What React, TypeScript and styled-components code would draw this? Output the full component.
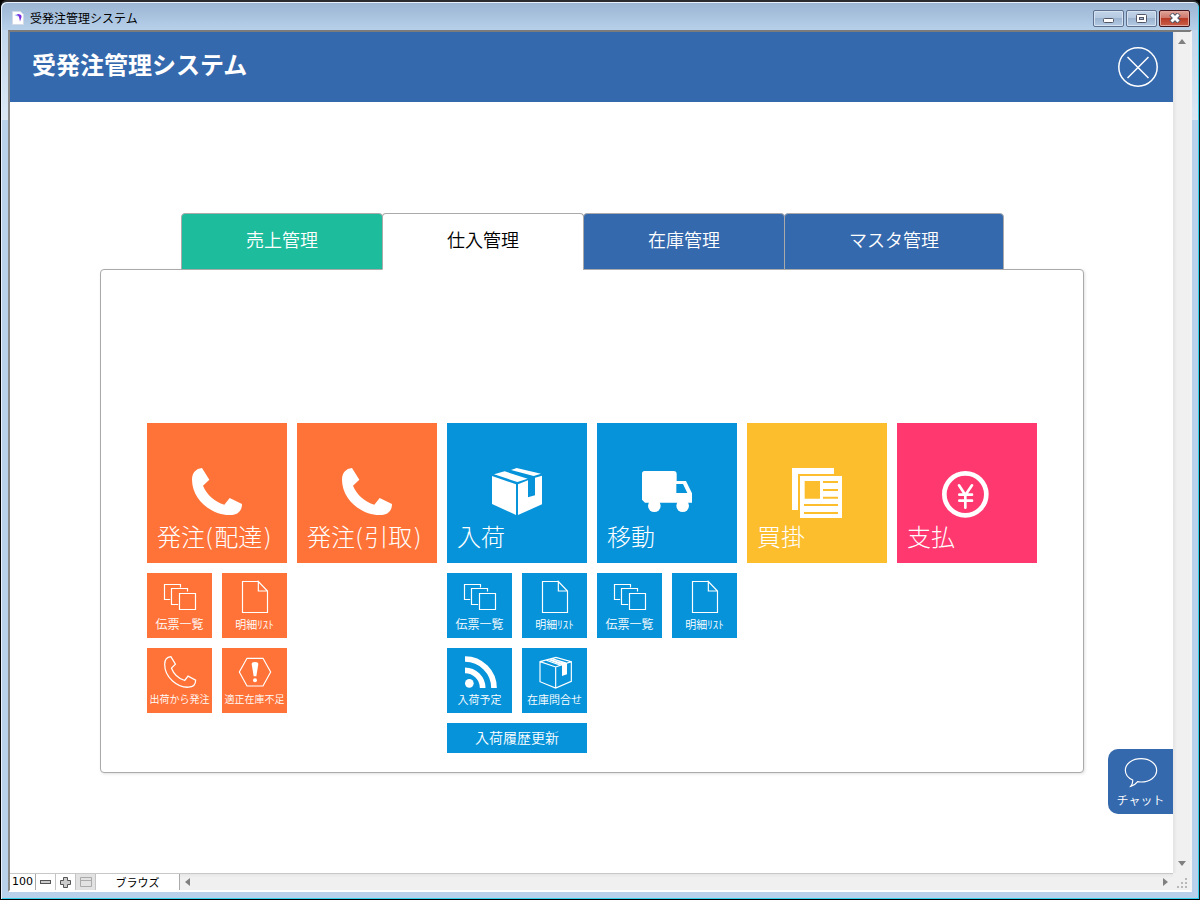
import React, { useState } from "react";
import styled, { createGlobalStyle } from "styled-components";

const BLUE = "#3569ad";
const SKY = "#0693da";
const ORANGE = "#ff7338";
const AMBER = "#fcbe2d";
const PINK = "#ff3870";
const GREEN = "#1cbc9c";
const LINE = "#aaaaaa";

const GlobalStyle = createGlobalStyle`
  * { box-sizing: border-box; }
  body {
    margin: 0;
    background: #000;
    font-family: "Noto Sans CJK JP", sans-serif;
    color: #000;
  }
  button, input { font: inherit; color: inherit; border: 0; margin: 0; padding: 0; background: none; }
  button { cursor: pointer; }
  svg { display: block; }
`;

const Frame = styled.div`
  min-height: 100vh;
  display: flex;
  flex-direction: column;
  padding: 0 7px 7px;
  border: 1px solid #000;
  border-top: 2px solid #2b2b2f;
  border-right-color: #1a1a1a;
  border-radius: 7px 7px 0 0;
  box-shadow: inset 1px 1px 0 #e8f1fa, inset -1px -1px 0 #35d0ee;
  background:
    linear-gradient(#9ab4d2, #b7d0ea 28px, transparent 28px),
    linear-gradient(#b9d1ea, #dce8f4 118px, #b9d1ea 118px);
`;

const TitleBar = styled.div`
  height: 28px;
  flex: none;
  display: flex;
  align-items: center;
  padding: 4px 2px 0 4px;
`;

const Title = styled.span`
  flex: 1;
  margin-left: 6px;
  font-size: 12px;
  line-height: 16px;
`;

const WindowButtons = styled.div`
  display: flex;
  gap: 2px;
`;

const WindowButton = styled.button<{ $danger?: boolean }>`
  width: 31px;
  height: 17px;
  display: grid;
  place-items: center;
  border: 1px solid ${(p) => (p.$danger ? "#43141c" : "#5d6f8c")};
  border-radius: 2px;
  box-shadow: inset 0 0 0 1px ${(p) => (p.$danger ? "#e0a59b" : "#d4e2f2")};
  background: ${(p) =>
    p.$danger
      ? "linear-gradient(#e0a398, #cf7468 48%, #b93a25 50%, #c9604a)"
      : "linear-gradient(#c3d4e8, #b3c8e0 48%, #9cb4d0 50%, #b4cae4)"};
`;

const Client = styled.div`
  flex: 1;
  display: grid;
  grid-template-columns: minmax(0, 1fr) 17px;
  grid-template-rows: 1fr 17px;
  border: 2px solid;
  border-color: #7b7b7b #f4f4f4 #fff #8a8a8a;
  background: #fff;
`;

const Page = styled.div`
  position: relative;
  display: flex;
  flex-direction: column;
`;

const Header = styled.header`
  height: 70px;
  display: flex;
  align-items: center;
  justify-content: space-between;
  padding: 0 15px 0 22px;
  background: ${BLUE};
  color: #fff;
`;

const Heading = styled.h1`
  margin: 0 0 6px;
  font-size: 24px;
  line-height: 32px;
  font-weight: 700;
`;

const Main = styled.main`
  padding: 111px 89px 100px 90px;
`;

const Tabs = styled.div`
  position: relative;
  z-index: 1;
  display: flex;
  padding-left: 81px;
  margin-bottom: -1px;
`;

const Tab = styled.button<{ $fill: string; $active: boolean; $wide?: boolean }>`
  width: ${(p) => (p.$wide ? 220 : 202)}px;
  height: 57px;
  padding-bottom: 5px;
  font-size: 18px;
  line-height: 24px;
  font-weight: 350;
  color: ${(p) => (p.$active ? "#000" : "#fff")};
  background: ${(p) => p.$fill};
  border: 1px solid ${LINE};
  border-bottom-color: ${(p) => (p.$active ? "#fff" : LINE)};
  border-radius: 4px 4px 0 0;
  & + & { margin-left: -1px; }
`;

const Panel = styled.section`
  display: flex;
  gap: 10px;
  padding: 153px 46px 19px;
  border: 1px solid ${LINE};
  border-radius: 4px;
  box-shadow: 1px 1px 3px rgba(0, 0, 0, 0.12);
  background: #fff;
`;

const Group = styled.div`
  width: 140px;
  flex: none;
  display: grid;
  grid-template-columns: 65px 65px;
  align-content: start;
  gap: 10px;
`;

const BigTile = styled.button<{ $fill: string }>`
  grid-column: 1 / -1;
  height: 140px;
  display: flex;
  flex-direction: column;
  justify-content: space-between;
  align-items: center;
  padding: 45px 0 9px;
  background: ${(p) => p.$fill};
  color: #fff;
`;

const BigLabel = styled.span`
  align-self: stretch;
  padding-left: 10px;
  text-align: left;
  white-space: nowrap;
  font-family: "DejaVu Sans", "Noto Sans CJK JP", sans-serif;
  font-size: 24px;
  line-height: 32px;
  font-weight: 300;
`;

const SmallTile = styled.button<{ $fill: string }>`
  width: 65px;
  height: 65px;
  display: flex;
  flex-direction: column;
  align-items: center;
  gap: 3px;
  padding-top: 8px;
  background: ${(p) => p.$fill};
  color: #fff;
`;

const SmallLabel = styled.span<{ $size: number }>`
  white-space: nowrap;
  font-size: ${(p) => p.$size}px;
  line-height: 16px;
  font-weight: 350;
`;

const BarButton = styled.button`
  grid-column: 1 / -1;
  height: 30px;
  padding-bottom: 3px;
  background: ${SKY};
  color: #fff;
  font-size: 14px;
  line-height: 20px;
  font-weight: 350;
`;

const ChatButton = styled(SmallTile)`
  position: absolute;
  right: 0;
  bottom: 59px;
  border-radius: 10px 0 0 10px;
`;

const VScroll = styled.div`
  display: flex;
  flex-direction: column;
  justify-content: space-between;
  align-items: center;
  padding: 6px 0;
  background: linear-gradient(90deg, #e3e3e3, #f0f0f0 4px);
`;

const StatusBar = styled.div`
  display: flex;
  border-top: 1px solid #c8c8c8;
  background: #fff;
`;

const Zoom = styled.input`
  width: 26px;
  border-right: 1px solid ${LINE};
  text-align: center;
  font-family: "DejaVu Sans", sans-serif;
  font-size: 11px;
  line-height: 16px;
`;

const StatusButton = styled.button<{ $pressed?: boolean }>`
  width: 20px;
  display: grid;
  place-items: center;
  border-right: 1px solid #c4c4c4;
  background: ${(p) => (p.$pressed ? "#e2e2e2" : "#fff")};
`;

const ModeButton = styled.button`
  width: 84px;
  border-right: 1px solid ${LINE};
  font-size: 11px;
  line-height: 16px;
`;

const HScroll = styled.div`
  flex: 1;
  display: flex;
  align-items: center;
  justify-content: space-between;
  padding: 0 4px;
  background: linear-gradient(#e6e6e6, #f0f0f0 4px);
`;

const ArrowButton = styled.button`
  display: block;
`;

const Corner = styled.div`
  display: flex;
  align-items: flex-end;
  justify-content: flex-end;
  padding: 0 3px 2px 0;
  background: #f0f0f0;
`;

type IconName =
  | "phone" | "box" | "truck" | "news" | "yen"
  | "stack" | "page" | "phoneLine" | "alert" | "rss" | "boxLine" | "chat";

const PHONE = "M30 0 52 35 33 53C44 80 68 101 97 110L113 90 150 108C150 128 138 141 115 141 60 143 0 95 0 35 0 14 12 2 30 0Z";

const bigArt: Partial<Record<IconName, React.ReactNode>> = {
  phone: <path d={PHONE} />,
  box: (
    <path d="M0 24 72 49V141L0 108ZM78 49 108 37V88L129 82V29L150 23V109L78 141ZM6 19 38 10 107 32 76 42ZM57 6 74 0 147 17 125 24Z" />
  ),
  truck: (
    <>
      <path
        fillRule="evenodd"
        d="M8 9H95Q104 9 104 18V39H132L150 76V104H9L0 95V17Q0 9 8 9ZM103 48V75H136L123 48Z"
      />
      <circle cx="37" cy="113" r="19" />
      <circle cx="122" cy="113" r="19" />
    </>
  ),
  news: (
    <path
      fillRule="evenodd"
      d="M0 0H126V18H18V126H0ZM24 24H150V150H24ZM38 39V92H84V39ZM93 39V45H138V39ZM93 63V69H138V63ZM93 86V92H138V86ZM36 108V114H138V108ZM36 132V138H138V132Z"
    />
  ),
  yen: (
    <g fill="none" stroke="currentColor" strokeLinecap="round">
      <circle cx="70" cy="79" r="63" strokeWidth="14" />
      <path strokeWidth="8" d="M51 52 70 81 90 52M70 81V119M52 80H90M52 98H90" />
    </g>
  ),
};

const smallArt: Partial<Record<IconName, React.ReactNode>> = {
  stack: (
    <path d="M46.500 37.500H94.500V85.500H46.500ZM70.500 31.500V22.500H22.500V70.500H42.500M49.500 19.500V10.500H1.500V55.500H18.500" />
  ),
  page: <path d="M58 1.500H10.500V94.500H85.500V30L58 1.500V30H85.500" />,
  phoneLine: <path d={PHONE} transform="translate(2 2) scale(.62 .65)" strokeWidth="6" />,
  alert: (
    <>
      <path d="M24 7H72L95 48 72 90H24L1 48Z" />
      <path fill="currentColor" stroke="none" d="M38 24Q38 18 48 18T58 24L52 61H44Z" />
      <circle cx="48" cy="73" r="6" fill="currentColor" stroke="none" />
    </>
  ),
  rss: (
    <>
      <circle cx="16" cy="82" r="13" fill="currentColor" stroke="none" />
      <path strokeWidth="17" d="M3 43A53 53 0 0 1 56 96M3 9A87 87 0 0 1 90 96" />
    </>
  ),
  boxLine: (
    <>
      <path d="M3 17 51 4 97 17V76L50 96 3 77ZM3 17 50 33 97 17M50 33V96M20 12 66 28M38 8 82 21" />
      <path fill="currentColor" stroke="none" d="M36 7 84 22V55L69 60V28L28 12 36 9 72 22Z" />
    </>
  ),
  chat: (
    <path d="M23 69C9 63 1 53 1 40 1 20 22 5 48 5S95 20 95 40 74 75 48 75C44 75 41 75 38 74 32 82 25 86 17 88 22 82 24 76 23 69Z" />
  ),
};

function BigIcon({ name }: { name: IconName }) {
  return (
    <svg width="50" height="50" viewBox="0 0 150 150" fill="currentColor" aria-hidden="true">
      {bigArt[name]}
    </svg>
  );
}

function SmallIcon({ name }: { name: IconName }) {
  return (
    <svg width="32" height="32" viewBox="0 0 96 96" fill="none" stroke="currentColor" strokeWidth="3.500" overflow="visible" aria-hidden="true">
      {smallArt[name]}
    </svg>
  );
}

interface Small { icon: IconName; label: string; size: number }
interface TileGroup { icon: IconName; label: string; fill: string; items: Small[]; bar?: string }

const slips: Small = { icon: "stack", label: "伝票一覧", size: 12 };
const details: Small = { icon: "page", label: "明細ﾘｽﾄ", size: 11 };

const groups: TileGroup[] = [
  {
    icon: "phone", label: "発注(配達)", fill: ORANGE,
    items: [
      slips,
      details,
      { icon: "phoneLine", label: "出荷から発注", size: 10 },
      { icon: "alert", label: "適正在庫不足", size: 10 },
    ],
  },
  { icon: "phone", label: "発注(引取)", fill: ORANGE, items: [] },
  {
    icon: "box", label: "入荷", fill: SKY,
    items: [
      slips,
      details,
      { icon: "rss", label: "入荷予定", size: 11 },
      { icon: "boxLine", label: "在庫問合せ", size: 11 },
    ],
    bar: "入荷履歴更新",
  },
  { icon: "truck", label: "移動", fill: SKY, items: [slips, details] },
  { icon: "news", label: "買掛", fill: AMBER, items: [] },
  { icon: "yen", label: "支払", fill: PINK, items: [] },
];

const tabs = [
  { label: "売上管理", fill: GREEN },
  { label: "仕入管理", fill: "#fff" },
  { label: "在庫管理", fill: BLUE },
  { label: "マスタ管理", fill: BLUE, wide: true },
];

const arrows = {
  up: "M0 6 4 1 8 6Z",
  down: "M0 2 8 2 4 7Z",
  left: "M6 0V8L1 4Z",
  right: "M2 0 7 4 2 8Z",
};

function Arrow({ dir, label }: { dir: keyof typeof arrows; label: string }) {
  return (
    <ArrowButton aria-label={label}>
      <svg width="8" height="8" viewBox="0 0 8 8"><path fill="#808080" d={arrows[dir]} /></svg>
    </ArrowButton>
  );
}

export default function App() {
  const [zoom, setZoom] = useState(100);
  return (
    <>
      <GlobalStyle />
      <Frame>
        <TitleBar>
          <svg width="12" height="14" viewBox="0 0 12 14" aria-hidden="true">
            <path fill="#fff" stroke="#d5dbe6" d="M.5.5H8.500L11.500 3.500V13.500H.5Z" />
            <path fill="#8ea4f4" d="M2.500 4 7 3 6 5.500Z" />
            <path fill="#7a2be0" d="M5 3Q10 3 9.500 6L8 10.500 7 6Z" />
          </svg>
          <Title>受発注管理システム</Title>
          <WindowButtons>
            <WindowButton aria-label="最小化">
              <svg width="11" height="9" viewBox="0 0 11 9"><rect x=".5" y="4.500" width="10" height="4" rx="1" fill="#fff" stroke="#535666" /></svg>
            </WindowButton>
            <WindowButton aria-label="元に戻す">
              <svg width="11" height="9" viewBox="0 0 11 9">
                <rect x=".5" y=".5" width="10" height="8" rx="1" fill="#fff" stroke="#535666" />
                <rect x="3.500" y="3.500" width="4" height="2" fill="#a5bad4" stroke="#535666" />
              </svg>
            </WindowButton>
            <WindowButton $danger aria-label="閉じる">
              <svg width="12" height="10" viewBox="0 0 12 10">
                <path d="M2 1 10 9M10 1 2 9" stroke="#535666" strokeWidth="5" />
                <path d="M2.500 1.500 9.500 8.500M9.500 1.500 2.500 8.500" stroke="#fff" strokeWidth="3" />
              </svg>
            </WindowButton>
          </WindowButtons>
        </TitleBar>
        <Client>
          <Page>
            <Header>
              <Heading>受発注管理システム</Heading>
              <button aria-label="終了">
                <svg width="40" height="40" viewBox="0 0 40 40" fill="none" stroke="#fff" strokeWidth="1.500">
                  <circle cx="20" cy="20" r="19.200" />
                  <path d="M9.500 10 30.500 31M30.500 10 9.500 31" />
                </svg>
              </button>
            </Header>
            <Main>
              <Tabs role="tablist">
                {tabs.map((t, i) => (
                  <Tab key={t.label} role="tab" aria-selected={i === 1} $fill={t.fill} $active={i === 1} $wide={t.wide}>
                    {t.label}
                  </Tab>
                ))}
              </Tabs>
              <Panel role="tabpanel">
                {groups.map((g) => (
                  <Group key={g.label}>
                    <BigTile $fill={g.fill}>
                      <BigIcon name={g.icon} />
                      <BigLabel>{g.label}</BigLabel>
                    </BigTile>
                    {g.items.map((s) => (
                      <SmallTile key={s.label} $fill={g.fill}>
                        <SmallIcon name={s.icon} />
                        <SmallLabel $size={s.size}>{s.label}</SmallLabel>
                      </SmallTile>
                    ))}
                    {g.bar && <BarButton>{g.bar}</BarButton>}
                  </Group>
                ))}
              </Panel>
            </Main>
            <ChatButton $fill={BLUE}>
              <SmallIcon name="chat" />
              <SmallLabel $size={12}>チャット</SmallLabel>
            </ChatButton>
          </Page>
          <VScroll>
            <Arrow dir="up" label="上へ" />
            <Arrow dir="down" label="下へ" />
          </VScroll>
          <StatusBar>
            <Zoom aria-label="表示倍率" value={zoom} onChange={(e) => setZoom(Number(e.target.value) || 0)} />
            <StatusButton aria-label="縮小" onClick={() => setZoom(zoom / 2)}>
              <svg width="11" height="5" viewBox="0 0 11 5"><rect x=".5" y=".5" width="10" height="3" fill="#ccc" stroke="#555" /></svg>
            </StatusButton>
            <StatusButton aria-label="拡大" onClick={() => setZoom(zoom * 2)}>
              <svg width="11" height="11" viewBox="0 0 11 11"><path d="M3.500.5H7.500V3.500H10.500V7.500H7.500V10.500H3.500V7.500H.5V3.500H3.500Z" fill="#ccc" stroke="#555" /></svg>
            </StatusButton>
            <StatusButton $pressed aria-label="ステータスツールバー">
              <svg width="12" height="10" viewBox="0 0 12 10"><path d="M.5.5H11.500V9.500H.5ZM.5 3.500H11.500" fill="none" stroke="#aaa" /></svg>
            </StatusButton>
            <ModeButton>ブラウズ</ModeButton>
            <HScroll>
              <Arrow dir="left" label="左へ" />
              <Arrow dir="right" label="右へ" />
            </HScroll>
          </StatusBar>
          <Corner>
            <svg width="10" height="10" viewBox="0 0 10 10" fill="#b8b8b8" aria-hidden="true">
              <path d="M8 0h2v2H8zM8 4h2v2H8zM8 8h2v2H8zM4 4h2v2H4zM4 8h2v2H4zM0 8h2v2H0z" />
            </svg>
          </Corner>
        </Client>
      </Frame>
    </>
  );
}
